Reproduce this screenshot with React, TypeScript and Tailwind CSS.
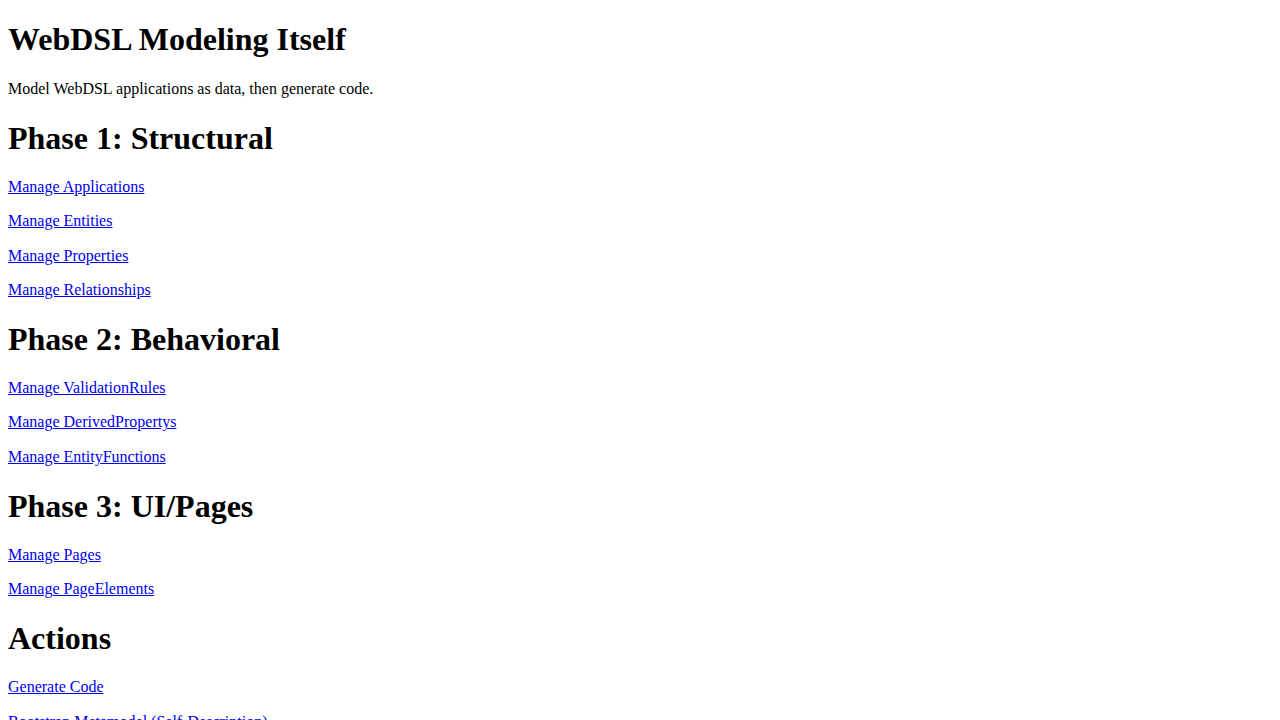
const sections: { title: string; links: string[] }[] = [
  {
    title: "Phase 1: Structural",
    links: ["Manage Applications", "Manage Entities", "Manage Properties", "Manage Relationships"],
  },
  {
    title: "Phase 2: Behavioral",
    links: ["Manage ValidationRules", "Manage DerivedPropertys", "Manage EntityFunctions"],
  },
  {
    title: "Phase 3: UI/Pages",
    links: ["Manage Pages", "Manage PageElements"],
  },
  {
    title: "Actions",
    links: ["Generate Code", "Bootstrap Metamodel (Self-Description)"],
  },
];

export default function App() {
  return (
    <div className="px-2 bg-white text-black text-base font-['Liberation_Serif','Times_New_Roman',serif]">
      <h1 className="text-[32px] leading-[36.8px] font-bold my-[21.44px]">WebDSL Modeling Itself</h1>
      <p className="my-4 leading-[18.4px]">Model WebDSL applications as data, then generate code.</p>
      {sections.map((s) => (
        <div key={s.title}>
          <h1 className="text-[32px] leading-[36.8px] font-bold my-[21.44px]">{s.title}</h1>
          {s.links.map((l) => (
            <p key={l} className="my-4 leading-[18.4px]">
              <a href="#" className="text-[#0000ee] underline">
                {l}
              </a>
            </p>
          ))}
        </div>
      ))}
    </div>
  );
}
